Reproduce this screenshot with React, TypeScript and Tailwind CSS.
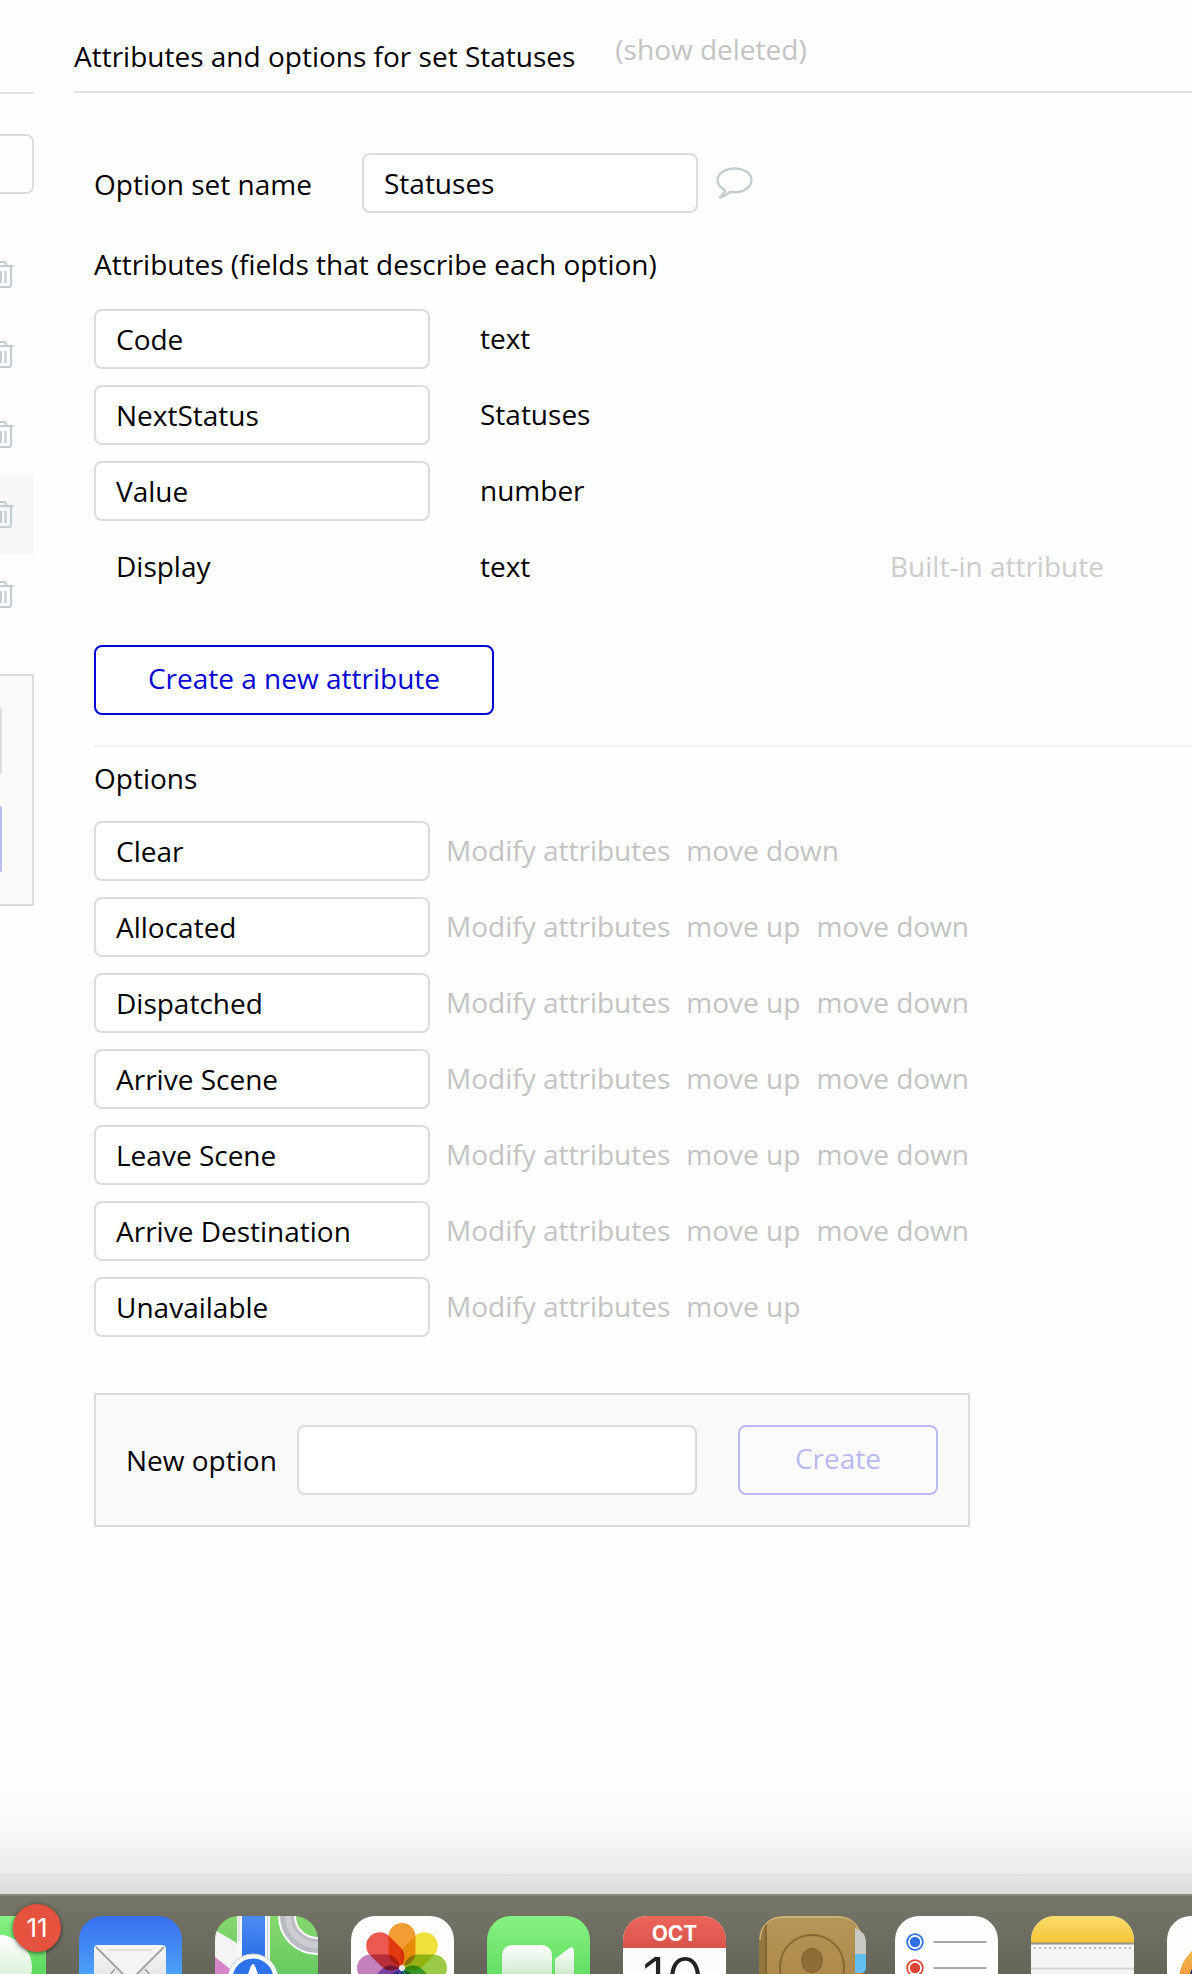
import type { ReactNode } from "react";

type Attribute = { name: string; type: string; builtIn?: boolean };

const attributes: Attribute[] = [
  { name: "Code", type: "text" },
  { name: "NextStatus", type: "Statuses" },
  { name: "Value", type: "number" },
  { name: "Display", type: "text", builtIn: true },
];

const options = [
  "Clear",
  "Allocated",
  "Dispatched",
  "Arrive Scene",
  "Leave Scene",
  "Arrive Destination",
  "Unavailable",
];

const inputClass =
  "h-[60px] w-[336px] rounded-lg border-2 border-[#dcdcdc] bg-white px-5 text-black outline-none";

/* Right-hand half of the bin: the list it belongs to runs off the left edge. */
function TrashIcon() {
  return (
    <svg width="14" height="28" viewBox="0 0 14 28" fill="none" stroke="#c3cdd0" strokeWidth="2.2">
      <path d="M0 6h13.5" />
      <path d="M0 2h4q2 0 2.5 3.5" />
      <path d="M11 6v19q0 2-2 2H0" />
      <path d="M0.500 11v12" strokeWidth="3" />
      <path d="M5.500 11v12" />
    </svg>
  );
}

function CommentIcon() {
  return (
    <svg width="37" height="32" viewBox="0 0 37 32" fill="none" stroke="#c3cdd0" strokeWidth="2.4" strokeLinejoin="round">
      <path d="M19 1.500C28 1.500 35.500 6.500 35.500 13.300S28 25.300 19 25.300c-1.500 0-2.700 0-3.800-.3-1.200-.3-2 .6-3.200 1.500-2.500 2-5 3.300-8 3.800 2.800-2 4.600-4.700 5-7.300C4.500 20.700 1.500 17.600 1.500 13.300 1.500 6.500 9.500 1.500 19 1.500Z" />
    </svg>
  );
}

function Sidebar() {
  return (
    <aside className="w-[34px] shrink-0">
      <div className="h-[94px] border-b-2 border-[#e2e2e2]" />
      <input
        aria-label="Search option sets"
        className="mt-10 block h-[60px] w-full rounded-r-lg border-2 border-l-0 border-[#dcdcdc] outline-none"
      />
      <div className="mt-10">
        {[0, 1, 2, 3, 4].map((i) => (
          <div key={i} className={i === 3 ? "flex h-20 items-center bg-[#f8f8f8]" : "flex h-20 items-center"}>
            <button aria-label="Delete option set">
              <TrashIcon />
            </button>
          </div>
        ))}
      </div>
      <div className="mt-10 border-2 border-l-0 border-[#dcdcdc] bg-[#f9f9f9] py-8">
        <div className="h-[66px] w-0.5 rounded-r-xs bg-[#dcdcdc]" />
        <div className="mt-8 h-[66px] w-0.5 rounded-r-xs bg-[#b9baf0]" />
      </div>
    </aside>
  );
}

function AppTile({ children, label }: { children: ReactNode; label: string }) {
  return (
    <svg className="shrink-0 overflow-visible" width="103" height="103" viewBox="0 0 103 103" role="img" aria-label={label}>
      <defs>
        <clipPath id={`tile-${label}`}>
          <rect width="103" height="103" rx="24" />
        </clipPath>
      </defs>
      <g clipPath={`url(#tile-${label})`}>{children}</g>
    </svg>
  );
}

function Gradient({ id, from, to }: { id: string; from: string; to: string }) {
  return (
    <linearGradient id={id} x1="0" y1="0" x2="0" y2="1">
      <stop offset="0" stopColor={from} />
      <stop offset="1" stopColor={to} />
    </linearGradient>
  );
}

const petals = ["#f59f33", "#f2e23c", "#9ccc48", "#5cbf96", "#7a9fe0", "#9d7fd0", "#c583c0", "#ee5a50"];

function Dock() {
  return (
    <footer className="h-20 shrink-0 overflow-hidden border-t-2 border-[#87877e] bg-linear-to-b from-[#757568] to-[#65655a]">
      <div className="-ml-[57px] flex gap-[33px] pt-5">
        <div className="relative shrink-0">
          <AppTile label="Messages">
            <Gradient id="msg" from="#86f184" to="#3cc63f" />
            <Gradient id="msgb" from="#ffffff" to="#c5e8c2" />
            <rect width="103" height="103" fill="url(#msg)" />
            <ellipse cx="51" cy="51" rx="38" ry="33" fill="url(#msgb)" />
          </AppTile>
          <span className="absolute -top-3 left-[70px] flex size-12 items-center justify-center rounded-full bg-[#e5533f] font-[Inter] text-[26px] leading-none text-white shadow-[0_1px_4px_rgba(0,0,0,0.6)]">
            11
          </span>
        </div>

        <AppTile label="Mail">
          <Gradient id="mail" from="#376ff0" to="#5cc8fa" />
          <Gradient id="env" from="#f7f7f7" to="#dcdcdc" />
          <rect width="103" height="103" fill="url(#mail)" />
          <rect x="15" y="29" width="72" height="50" rx="4" fill="url(#env)" />
          <path d="M16 76 36 53M86 76 66 53" stroke="#999" strokeWidth="1.500" />
          <path d="M17 31 43 57q8 7 16 0L85 31" fill="#f4f4f4" stroke="#a3a3a3" strokeWidth="1.800" />
          <path d="M29 34h44" stroke="#e2e2e2" strokeWidth="2" />
        </AppTile>

        <AppTile label="Maps">
          <Gradient id="grn" from="#86d86f" to="#4dbf55" />
          <Gradient id="road" from="#4c8cf0" to="#1f63e8" />
          <rect width="103" height="103" fill="url(#grn)" />
          <path d="M0 14 22 27 60 60 40 103H0Z" fill="#f4f4f5" />
          <path d="M0 41 24 60v43H0Z" fill="#d884c8" />
          <path d="M22 0h33v60H22Z" fill="#f7f7f7" />
          <path d="M24 0v25M52.500 0v45" stroke="#cfd3da" />
          <rect x="27" width="23" height="60" fill="url(#road)" />
          <circle cx="102" cy="0" r="30" fill="none" stroke="#fff" strokeWidth="18" />
          <circle cx="102" cy="0" r="30" fill="none" stroke="#b9bbc3" strokeWidth="14" />
          <circle cx="102" cy="0" r="29" fill="none" stroke="#cdced4" strokeWidth="6" />
          <circle cx="38" cy="63" r="25" fill="#fff" stroke="#c9ced6" />
          <circle cx="38" cy="63" r="20.500" fill="#2f73ea" />
          <path d="M36 50q2-4 4 0l10 27-12-6-12 6Z" fill="#fff" />
        </AppTile>

        <AppTile label="Photos">
          <rect width="103" height="103" fill="#fdfdfd" />
          {petals.map((color, i) => (
            <rect
              key={color}
              x="37.500"
              y="7"
              width="27"
              height="43"
              rx="13.500"
              fill={color}
              transform={`rotate(${i * 45} 51 52)`}
              className="mix-blend-multiply"
            />
          ))}
          <circle cx="51" cy="52" r="3" fill="#e8e8e8" />
        </AppTile>

        <AppTile label="FaceTime">
          <Gradient id="ft" from="#86f281" to="#4bcf4d" />
          <Gradient id="cam" from="#ffffff" to="#b5dfb2" />
          <rect width="103" height="103" fill="url(#ft)" />
          <rect x="15" y="29" width="50" height="46" rx="10" fill="url(#cam)" />
          <path d="M68 43 81 33q6-4 6 3v32q0 7-6 3L68 61Z" fill="url(#cam)" />
        </AppTile>

        <AppTile label="Calendar">
          <Gradient id="cal" from="#ec655b" to="#d8554c" />
          <rect width="103" height="103" fill="#fcfcfb" />
          <rect width="103" height="32" fill="url(#cal)" />
          <text x="51.500" y="24.500" textAnchor="middle" fontFamily="Inter" fontWeight="700" fontSize="21" fill="#fff">
            OCT
          </text>
          <text x="50" y="86" textAnchor="middle" fontFamily="Inter" fontWeight="300" fontSize="62" fill="#222">
            10
          </text>
        </AppTile>

        <div className="relative shrink-0">
          <svg className="absolute top-0 left-[96px]" width="12" height="103" viewBox="0 0 12 103">
            <path d="M0 12q11 4 11 14v12H0Z" fill="#c9c8c3" />
            <path d="M0 38h11v14q0 4-4 5H0Z" fill="#62bdf0" />
            <path d="M0 57h8q3 1 3 5v20H0Z" fill="#df7d21" />
          </svg>
          <AppTile label="Contacts">
            <Gradient id="book" from="#b6975a" to="#a3803f" />
            <rect width="103" height="103" fill="url(#book)" />
            <rect width="6" height="103" fill="#96763f" />
            <rect x="6" width="2" height="103" fill="#866731" />
            <path d="M1 24Q2 1 25 1h54q22 0 23 23" fill="none" stroke="#d0b47c" strokeWidth="1.500" />
            <circle cx="53" cy="51" r="32" fill="none" stroke="#866830" strokeWidth="2" />
            <ellipse cx="53" cy="44.500" rx="10.500" ry="12" fill="#8e6e34" stroke="#7f602b" />
            <path d="M32 78q3-18 21-18t21 18" fill="#8e6e34" />
          </AppTile>
        </div>

        <AppTile label="Reminders">
          <rect width="103" height="103" fill="#fdfdfc" />
          {[
            { y: 26, color: "#2f6fe8" },
            { y: 52, color: "#de4534" },
            { y: 78, color: "#f0a030" },
          ].map(({ y, color }) => (
            <g key={y}>
              <circle cx="20" cy={y} r="7.800" fill="#fff" stroke={color} strokeWidth="1.800" />
              <circle cx="20" cy={y} r="5.200" fill={color} />
              <path d={`M38.500 ${y}h53`} stroke="#aaaaab" strokeWidth="2" />
            </g>
          ))}
        </AppTile>

        <AppTile label="Notes">
          <Gradient id="note" from="#f9dc6b" to="#f6c438" />
          <rect width="103" height="103" fill="#f5f4f2" />
          <rect width="103" height="27" fill="url(#note)" />
          <path d="M0 27.500h103" stroke="#98948c" strokeWidth="2" />
          <path d="M3 32h100" stroke="#bdbdbd" strokeWidth="2" strokeDasharray="2 3" />
          <path d="M0 52.500h103" stroke="#d5d5d2" strokeWidth="2" />
        </AppTile>

        <AppTile label="Browser">
          <Gradient id="ring" from="#f5c14e" to="#ec6a2d" />
          <rect width="103" height="103" fill="#fdfdfd" />
          <circle cx="51" cy="64" r="39" fill="url(#ring)" />
          <circle cx="53" cy="66" r="31" fill="#0d3355" />
        </AppTile>
      </div>
    </footer>
  );
}

export default function App() {
  return (
    <div className="flex min-h-screen flex-col overflow-hidden bg-[#fefefe] font-['Open_Sans',sans-serif] text-[28px] leading-[38px] text-black">
      <div className="flex">
        <Sidebar />
        <main className="ml-10 min-w-0 flex-1">
          <header className="flex h-[93px] items-start gap-10 border-b-2 border-[#e2e2e2] pt-[30px]">
            <h1 className="mt-[7px]">Attributes and options for set Statuses</h1>
            <button className="text-[#c3c3c3]">(show deleted)</button>
          </header>

          <div className="pt-[60px] pl-5">
            <div className="flex items-center">
              <label htmlFor="set-name" className="w-[268px] pt-0.5">
                Option set name
              </label>
              <input id="set-name" defaultValue="Statuses" className={inputClass} />
              <button aria-label="Add comment" className="ml-[18px]">
                <CommentIcon />
              </button>
            </div>

            <h2 className="mt-8">Attributes (fields that describe each option)</h2>
            <ul className="mt-[26px] flex flex-col gap-4">
              {attributes.map((a) => (
                <li key={a.name} className="grid h-[60px] grid-cols-[386px_410px_1fr] items-center">
                  {a.builtIn ? (
                    <span className="pb-0.5 pl-[22px]">{a.name}</span>
                  ) : (
                    <input aria-label={`Attribute ${a.name}`} defaultValue={a.name} className={inputClass} />
                  )}
                  <span className="pb-0.5">{a.type}</span>
                  {a.builtIn && <span className="pb-0.5 text-[#cccccc]">Built-in attribute</span>}
                </li>
              ))}
            </ul>

            <button className="mt-12 block h-[70px] w-[400px] rounded-lg border-2 border-[#0205d3] bg-white pb-1 text-[#0205d3]">
              Create a new attribute
            </button>

            <section className="mt-[30px] border-t-2 border-[#f2f2f2] pt-3">
              <h2>Options</h2>
              <ul className="mt-6 flex flex-col gap-4">
                {options.map((name, i) => (
                  <li key={name} className="flex items-center gap-4">
                    <input aria-label={`Option ${name}`} defaultValue={name} className={inputClass} />
                    <div className="flex gap-4 pb-0.5 text-[#c3c3c3]">
                      <button>Modify attributes</button>
                      {i > 0 && <button>move up</button>}
                      {i < options.length - 1 && <button>move down</button>}
                    </div>
                  </li>
                ))}
              </ul>
            </section>

            <form className="mt-14 flex w-[876px] items-center border-2 border-[#dcdcdc] bg-[#f9f9f9] p-[30px]">
              <label htmlFor="new-option" className="flex-1">
                New option
              </label>
              <input
                id="new-option"
                className="h-[70px] w-[400px] rounded-lg border-2 border-[#dcdcdc] bg-white px-5 outline-none"
              />
              <button
                type="button"
                disabled
                className="ml-[41px] h-[70px] w-[200px] rounded-lg border-2 border-[#b9baf0] bg-[#fbfbfb] pb-1 text-[#b9baf0]"
              >
                Create
              </button>
            </form>
          </div>
        </main>
      </div>

      <div className="flex-1" />
      <div className="h-24 bg-linear-to-b from-[#fefefe] via-[#f9f9f9] to-[#ebebeb]" />
      <div className="h-5 border-t-2 border-[#dfdfdf] bg-linear-to-b from-[#e7e7e7] to-[#dadada]" />
      <Dock />
    </div>
  );
}
